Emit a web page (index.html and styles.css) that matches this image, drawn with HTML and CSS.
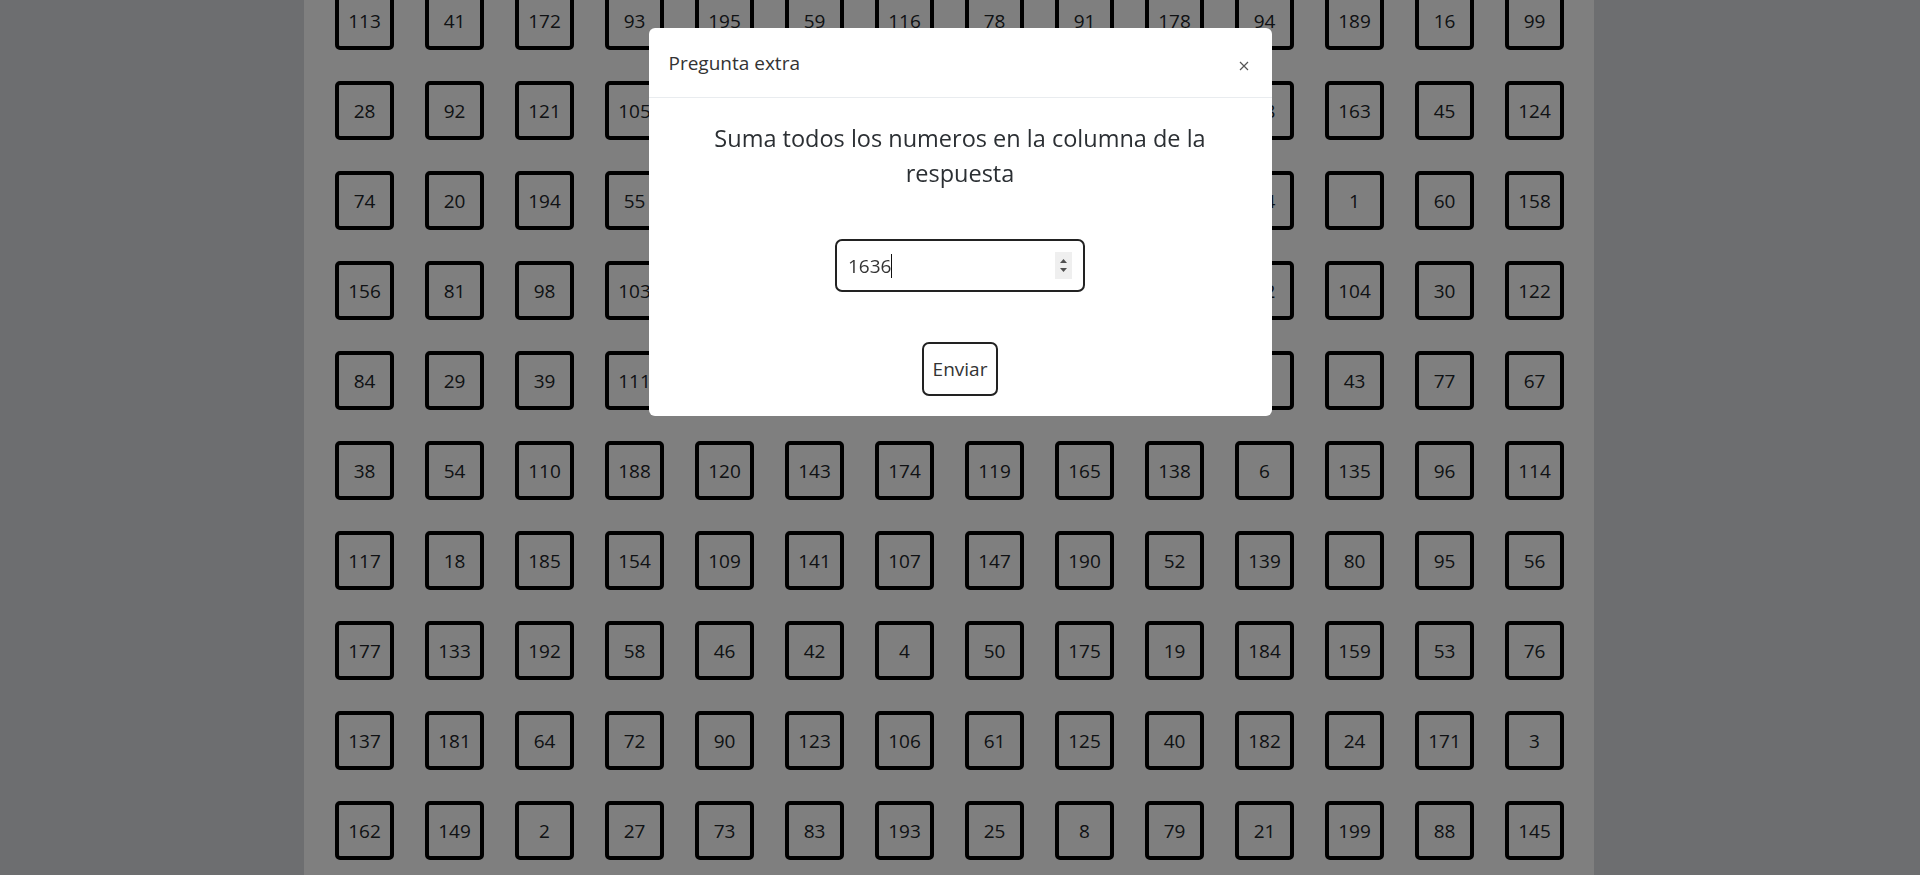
FILE: index.html
```html
<!DOCTYPE html>
<html lang="es">
<head>
<meta charset="utf-8">
<title>Pregunta extra</title>
<link rel="stylesheet" href="styles.css">
</head>
<body>
<main class="page">
  <div class="board">
    <div class="cell">113</div><div class="cell">41</div><div class="cell">172</div><div class="cell">93</div><div class="cell">195</div><div class="cell">59</div><div class="cell">116</div><div class="cell">78</div><div class="cell">91</div><div class="cell">178</div><div class="cell">94</div><div class="cell">189</div><div class="cell">16</div><div class="cell">99</div>
    <div class="cell">28</div><div class="cell">92</div><div class="cell">121</div><div class="cell">105</div><div class="cell"></div><div class="cell"></div><div class="cell"></div><div class="cell"></div><div class="cell"></div><div class="cell"></div><div class="cell">68</div><div class="cell">163</div><div class="cell">45</div><div class="cell">124</div>
    <div class="cell">74</div><div class="cell">20</div><div class="cell">194</div><div class="cell">55</div><div class="cell"></div><div class="cell"></div><div class="cell"></div><div class="cell"></div><div class="cell"></div><div class="cell"></div><div class="cell">34</div><div class="cell">1</div><div class="cell">60</div><div class="cell">158</div>
    <div class="cell">156</div><div class="cell">81</div><div class="cell">98</div><div class="cell">103</div><div class="cell"></div><div class="cell"></div><div class="cell"></div><div class="cell"></div><div class="cell"></div><div class="cell"></div><div class="cell">12</div><div class="cell">104</div><div class="cell">30</div><div class="cell">122</div>
    <div class="cell">84</div><div class="cell">29</div><div class="cell">39</div><div class="cell">111</div><div class="cell"></div><div class="cell"></div><div class="cell"></div><div class="cell"></div><div class="cell"></div><div class="cell"></div><div class="cell">31</div><div class="cell">43</div><div class="cell">77</div><div class="cell">67</div>
    <div class="cell">38</div><div class="cell">54</div><div class="cell">110</div><div class="cell">188</div><div class="cell">120</div><div class="cell">143</div><div class="cell">174</div><div class="cell">119</div><div class="cell">165</div><div class="cell">138</div><div class="cell">6</div><div class="cell">135</div><div class="cell">96</div><div class="cell">114</div>
    <div class="cell">117</div><div class="cell">18</div><div class="cell">185</div><div class="cell">154</div><div class="cell">109</div><div class="cell">141</div><div class="cell">107</div><div class="cell">147</div><div class="cell">190</div><div class="cell">52</div><div class="cell">139</div><div class="cell">80</div><div class="cell">95</div><div class="cell">56</div>
    <div class="cell">177</div><div class="cell">133</div><div class="cell">192</div><div class="cell">58</div><div class="cell">46</div><div class="cell">42</div><div class="cell">4</div><div class="cell">50</div><div class="cell">175</div><div class="cell">19</div><div class="cell">184</div><div class="cell">159</div><div class="cell">53</div><div class="cell">76</div>
    <div class="cell">137</div><div class="cell">181</div><div class="cell">64</div><div class="cell">72</div><div class="cell">90</div><div class="cell">123</div><div class="cell">106</div><div class="cell">61</div><div class="cell">125</div><div class="cell">40</div><div class="cell">182</div><div class="cell">24</div><div class="cell">171</div><div class="cell">3</div>
    <div class="cell">162</div><div class="cell">149</div><div class="cell">2</div><div class="cell">27</div><div class="cell">73</div><div class="cell">83</div><div class="cell">193</div><div class="cell">25</div><div class="cell">8</div><div class="cell">79</div><div class="cell">21</div><div class="cell">199</div><div class="cell">88</div><div class="cell">145</div>
  </div>
</main>

<div class="backdrop"></div>

<div class="modal" role="dialog" aria-labelledby="modal-title">
  <div class="modal-content">
    <div class="modal-header">
      <h5 class="modal-title" id="modal-title">Pregunta extra</h5>
      <button type="button" class="btn-close" aria-label="Close">
        <svg width="10" height="10" viewBox="0 0 10 10" aria-hidden="true">
          <path d="M1 1 L9 9 M9 1 L1 9" stroke="#555" stroke-width="1.2" fill="none"/>
        </svg>
      </button>
    </div>
    <form class="modal-body">
      <p class="question">Suma todos los numeros en la columna de la respuesta</p>
      <div class="num-field">
        <input class="num-input" type="text" inputmode="numeric" value="1636">
        <span class="caret" aria-hidden="true"></span>
        <span class="spacer"></span>
        <span class="spinner" aria-hidden="true">
          <svg width="17" height="27" viewBox="0 0 17 27">
            <path d="M5 11 L8.5 7 L12 11 Z" fill="#505050"/>
            <path d="M5 16 L8.5 20 L12 16 Z" fill="#505050"/>
          </svg>
        </span>
      </div>
      <button type="submit" class="btn-send">Enviar</button>
    </form>
  </div>
</div>
</body>
</html>
```
FILE: styles.css
```css
html, body {
  margin: 0;
  padding: 0;
  height: 100%;
}

body {
  background: #dadde1;
  font-family: "Open Sans", "Noto Sans", sans-serif;
  color: #212529;
  overflow: hidden;
}

.page {
  width: 1290px;
  margin-left: 304px;
  min-height: 100vh;
  background: #ffffff;
  overflow: hidden;
}

.board {
  display: grid;
  grid-template-columns: repeat(14, 59px);
  grid-auto-rows: 59px;
  column-gap: 31px;
  row-gap: 31px;
  justify-content: center;
  margin-top: -9px;
  padding-left: 1px;
}

.cell {
  box-sizing: border-box;
  border: 4px solid #000;
  border-radius: 5px;
  display: flex;
  align-items: center;
  justify-content: center;
  font-size: 19px;
  color: #212529;
}

.backdrop {
  position: fixed;
  inset: 0;
  background: rgba(0, 0, 0, 0.5);
}

.modal {
  position: fixed;
  inset: 0;
  display: flex;
  justify-content: center;
  align-items: flex-start;
  padding-top: 28px;
}

.modal-content {
  width: 623px;
  height: 388px;
  box-sizing: border-box;
  background: #fff;
  border-radius: 6px;
  display: flex;
  flex-direction: column;
}

.modal-header {
  display: flex;
  align-items: center;
  justify-content: space-between;
  height: 70px;
  box-sizing: border-box;
  padding: 1px 20px 0;
  border-bottom: 1px solid #e9ecef;
}

.modal-title {
  margin: 0;
  font-size: 19px;
  font-weight: 400;
  color: #333;
  line-height: 30px;
}

.btn-close {
  border: 0;
  background: transparent;
  padding: 0;
  width: 16px;
  height: 16px;
  display: flex;
  align-items: center;
  justify-content: center;
  margin-top: 5px;
  cursor: pointer;
}

.modal-body {
  display: flex;
  flex-direction: column;
  align-items: center;
  padding: 23px 24px 20px;
}

.question {
  margin: 0;
  text-align: center;
  font-size: 23.5px;
  line-height: 35px;
  color: #2b2f33;
  max-width: 530px;
}

.num-field {
  margin-top: 48px;
  width: 250px;
  height: 53px;
  box-sizing: border-box;
  border: 2px solid #222;
  border-radius: 7px;
  display: flex;
  align-items: center;
  padding: 0 11px;
  background: #fff;
}

.num-input {
  flex: 0 0 auto;
  width: 44px;
  border: 0;
  outline: none;
  padding: 0;
  font-family: "Open Sans", "Noto Sans", sans-serif;
  font-size: 19px;
  color: #333;
  background: transparent;
}

.caret {
  width: 1px;
  height: 24px;
  margin-left: -1px;
  background: #111;
}

.spacer {
  flex: 1;
}

.spinner {
  width: 17px;
  height: 27px;
  background: #efefef;
  display: flex;
}

.btn-send {
  margin-top: 50px;
  width: 76px;
  height: 54px;
  box-sizing: border-box;
  border: 2px solid #222;
  border-radius: 7px;
  background: #fff;
  font-family: "Open Sans", "Noto Sans", sans-serif;
  font-size: 19px;
  color: #333;
  padding: 0;
  cursor: pointer;
}
```
